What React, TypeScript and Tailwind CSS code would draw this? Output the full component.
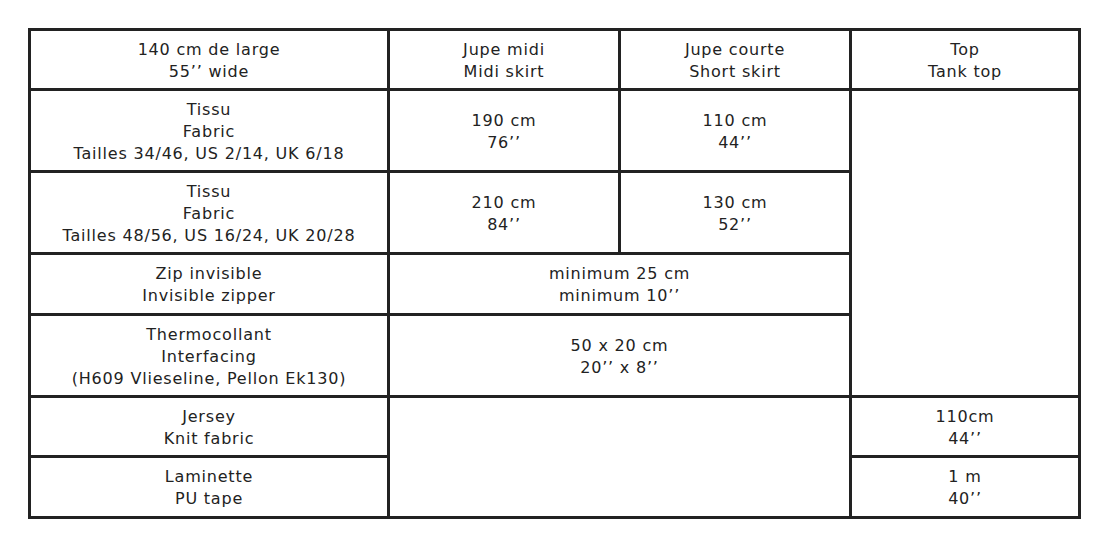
const cell = "border-[3px] border-[#222] text-center align-middle leading-[22px] pt-[2px]";

function Lines({ lines }: { lines: string[] }) {
  return (
    <>
      {lines.map((l, i) => (
        <div key={i}>{l}</div>
      ))}
    </>
  );
}

export default function App() {
  return (
    <div className="w-[1110px] h-[540px] bg-white pt-[28px] pl-[28px] font-['DejaVu_Sans',sans-serif] text-[16px] tracking-[0.8px] text-[#222]">
      <table className="table-fixed border-collapse w-[1050px]">
        <colgroup>
          <col className="w-[359px]" />
          <col className="w-[231px]" />
          <col className="w-[231px]" />
          <col className="w-[229px]" />
        </colgroup>
        <tbody>
          <tr className="h-[60px]">
            <td className={cell}><Lines lines={["140 cm de large", "55’’ wide"]} /></td>
            <td className={cell}><Lines lines={["Jupe midi", "Midi skirt"]} /></td>
            <td className={cell}><Lines lines={["Jupe courte", "Short skirt"]} /></td>
            <td className={cell}><Lines lines={["Top", "Tank top"]} /></td>
          </tr>
          <tr className="h-[82px]">
            <td className={cell}><Lines lines={["Tissu", "Fabric", "Tailles 34/46, US 2/14, UK 6/18"]} /></td>
            <td className={cell}><Lines lines={["190 cm", "76’’"]} /></td>
            <td className={cell}><Lines lines={["110 cm", "44’’"]} /></td>
            <td className={cell} rowSpan={4}></td>
          </tr>
          <tr className="h-[82px]">
            <td className={cell}><Lines lines={["Tissu", "Fabric", "Tailles 48/56, US 16/24, UK 20/28"]} /></td>
            <td className={cell}><Lines lines={["210 cm", "84’’"]} /></td>
            <td className={cell}><Lines lines={["130 cm", "52’’"]} /></td>
          </tr>
          <tr className="h-[61px]">
            <td className={cell}><Lines lines={["Zip invisible", "Invisible zipper"]} /></td>
            <td className={cell} colSpan={2}><Lines lines={["minimum 25 cm", "minimum 10’’"]} /></td>
          </tr>
          <tr className="h-[82px]">
            <td className={cell}><Lines lines={["Thermocollant", "Interfacing", "(H609 Vlieseline, Pellon Ek130)"]} /></td>
            <td className={cell} colSpan={2}><Lines lines={["50 x 20 cm", "20’’ x 8’’"]} /></td>
          </tr>
          <tr className="h-[60px]">
            <td className={cell}><Lines lines={["Jersey", "Knit fabric"]} /></td>
            <td className={cell} colSpan={2} rowSpan={2}></td>
            <td className={cell}><Lines lines={["110cm", "44’’"]} /></td>
          </tr>
          <tr className="h-[61px]">
            <td className={cell}><Lines lines={["Laminette", "PU tape"]} /></td>
            <td className={cell}><Lines lines={["1 m", "40’’"]} /></td>
          </tr>
        </tbody>
      </table>
    </div>
  );
}
